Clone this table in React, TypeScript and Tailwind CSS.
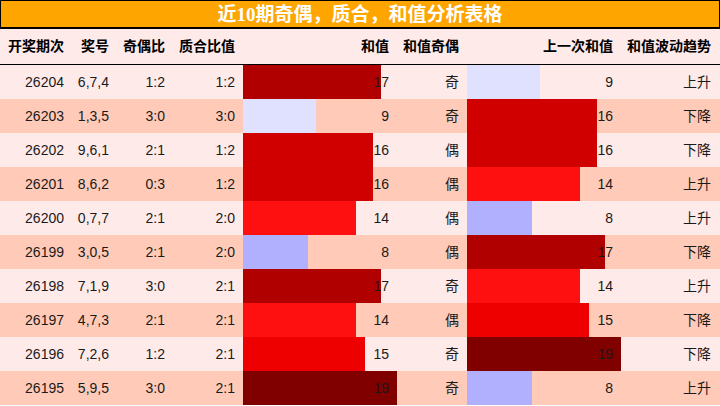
import React from "react";

type Row = {
  id: string;
  nums: string;
  oe: string;
  pc: string;
  sum: number;
  sumOe: string;
  prev: number;
  trend: string;
};

const rows: Row[] = [
  { id: "26204", nums: "6,7,4", oe: "1:2", pc: "1:2", sum: 17, sumOe: "奇", prev: 9, trend: "上升" },
  { id: "26203", nums: "1,3,5", oe: "3:0", pc: "3:0", sum: 9, sumOe: "奇", prev: 16, trend: "下降" },
  { id: "26202", nums: "9,6,1", oe: "2:1", pc: "1:2", sum: 16, sumOe: "偶", prev: 16, trend: "下降" },
  { id: "26201", nums: "8,6,2", oe: "0:3", pc: "1:2", sum: 16, sumOe: "偶", prev: 14, trend: "上升" },
  { id: "26200", nums: "0,7,7", oe: "2:1", pc: "2:0", sum: 14, sumOe: "偶", prev: 8, trend: "上升" },
  { id: "26199", nums: "3,0,5", oe: "2:1", pc: "2:0", sum: 8, sumOe: "偶", prev: 17, trend: "下降" },
  { id: "26198", nums: "7,1,9", oe: "3:0", pc: "2:1", sum: 17, sumOe: "奇", prev: 14, trend: "上升" },
  { id: "26197", nums: "4,7,3", oe: "2:1", pc: "2:1", sum: 14, sumOe: "偶", prev: 15, trend: "下降" },
  { id: "26196", nums: "7,2,6", oe: "1:2", pc: "2:1", sum: 15, sumOe: "奇", prev: 19, trend: "下降" },
  { id: "26195", nums: "5,9,5", oe: "3:0", pc: "2:1", sum: 19, sumOe: "奇", prev: 8, trend: "上升" },
];

const barColor: Record<number, string> = {
  19: "#800000",
  17: "#b00000",
  16: "#d00000",
  15: "#ee0000",
  14: "#ff1010",
  9: "#e0e0ff",
  8: "#b0b0ff",
};

function BarCell({ v }: { v: number }) {
  const w = Math.round((v / 19) * 154);
  return (
    <div className="relative flex h-full items-center justify-end pr-2">
      <div
        className="absolute left-0 top-0 bottom-0"
        style={{ width: w, backgroundColor: barColor[v] }}
      />
      <span className="relative">{v}</span>
    </div>
  );
}

export default function App() {
  const font = { fontFamily: '"Liberation Sans", "Noto Sans CJK SC", sans-serif' };
  return (
    <div className="w-[720px] h-[406px] bg-white text-[14px] text-[#1a1a1a]" style={font}>
      <div
        className="h-[29px] border border-b-2 border-black bg-[#ffa500] flex items-center justify-center text-white font-bold text-[19px] leading-none"
        style={{ fontFamily: '"Liberation Serif", "Noto Sans CJK SC", serif' }}
      >
        近10期奇偶，质合，和值分析表格
      </div>
      <div className="grid grid-cols-[72px_45px_56px_70px_154px_70px_154px_99px] h-[36px] bg-[#ffeaea] border-b border-black font-bold text-black">
        <div className="flex items-center justify-end pr-2">开奖期次</div>
        <div className="flex items-center justify-end pr-2">奖号</div>
        <div className="flex items-center justify-end pr-2">奇偶比</div>
        <div className="flex items-center justify-end pr-2">质合比值</div>
        <div className="flex items-center justify-end pr-2">和值</div>
        <div className="flex items-center justify-end pr-2">和值奇偶</div>
        <div className="flex items-center justify-end pr-2">上一次和值</div>
        <div className="flex items-center justify-end pr-[9px]">和值波动趋势</div>
      </div>
      {rows.map((r, i) => (
        <div
          key={r.id}
          className={
            "grid grid-cols-[72px_45px_56px_70px_154px_70px_154px_99px] h-[34px] " +
            (i % 2 === 0 ? "bg-[#ffeaea]" : "bg-[#ffcbb8]")
          }
        >
          <div className="flex items-center justify-end pr-2">{r.id}</div>
          <div className="flex items-center justify-end pr-2">{r.nums}</div>
          <div className="flex items-center justify-end pr-2">{r.oe}</div>
          <div className="flex items-center justify-end pr-2">{r.pc}</div>
          <BarCell v={r.sum} />
          <div className="flex items-center justify-end pr-2">{r.sumOe}</div>
          <BarCell v={r.prev} />
          <div className="flex items-center justify-end pr-[9px]">{r.trend}</div>
        </div>
      ))}
    </div>
  );
}
